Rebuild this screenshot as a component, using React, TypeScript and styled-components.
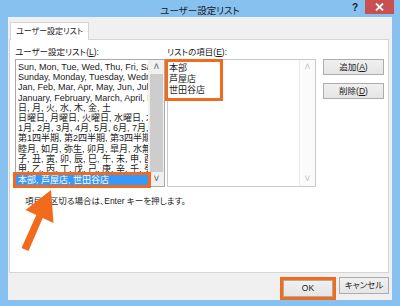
import styled, { createGlobalStyle } from 'styled-components';

const ORANGE = '#f26a1b';
const UI_FONT = `"Liberation Sans", "Noto Sans CJK JP", sans-serif`;

const LEFT_ITEMS = [
  'Sun, Mon, Tue, Wed, Thu, Fri, Sat',
  'Sunday, Monday, Tuesday, Wednesday, Thursday',
  'Jan, Feb, Mar, Apr, May, Jun, Jul, Aug, Sep',
  'January, February, March, April, May, June',
  '日, 月, 火, 水, 木, 金, 土',
  '日曜日, 月曜日, 火曜日, 水曜日, 木曜日',
  '1月, 2月, 3月, 4月, 5月, 6月, 7月, 8月',
  '第1四半期, 第2四半期, 第3四半期, 第4四半期',
  '睦月, 如月, 弥生, 卯月, 皐月, 水無月',
  '子, 丑, 寅, 卯, 辰, 巳, 午, 未, 申, 酉, 戌, 亥',
  '甲, 乙, 丙, 丁, 戊, 己, 庚, 辛, 壬, 癸',
];

const RIGHT_ITEMS = ['本部', '芦屋店', '世田谷店'];

const GlobalStyle = createGlobalStyle`
  html, body { margin: 0; padding: 0; background: #86c1ef; }
  body { font-family: ${UI_FONT}; }
`;

export default function App() {
  return (
    <>
      <GlobalStyle />
      <Frame>
        <TitleBar>
          <span />
          <Title>ユーザー設定リスト</Title>
          <Caption>
            <HelpMark>?</HelpMark>
            <CloseBox>
              <svg width="9" height="8" viewBox="0 0 9 8" aria-hidden="true">
                <path d="M1 0.5 L8 7.5 M8 0.5 L1 7.5" stroke="#fff" strokeWidth="1.8" />
              </svg>
            </CloseBox>
          </Caption>
        </TitleBar>

        <Client>
          <TabStrip>
            <Tab>ユーザー設定リスト</Tab>
          </TabStrip>
          <Panel>
            <Columns>
              <Column $width={150}>
                <FieldLabel>ユーザー設定リスト(<u>L</u>):</FieldLabel>
                <ListBox>
                  <Rows>
                    {LEFT_ITEMS.map(item => (
                      <Row key={item}>{item}</Row>
                    ))}
                    <Row $selected>本部, 芦屋店, 世田谷店</Row>
                  </Rows>
                  <ScrollBar>
                    <Arrow $disabled={false}>˄</Arrow>
                    <Thumb />
                    <Arrow $disabled={false}>˅</Arrow>
                  </ScrollBar>
                </ListBox>
              </Column>
              <Column $width={149}>
                <FieldLabel>リストの項目(<u>E</u>):</FieldLabel>
                <ListBox $light>
                  <Rows>
                    <EntryGroup>
                      {RIGHT_ITEMS.map(item => (
                        <Entry key={item}>{item}</Entry>
                      ))}
                    </EntryGroup>
                  </Rows>
                  <ScrollBar $disabled>
                    <Arrow $disabled>˄</Arrow>
                    <Spacer />
                    <Arrow $disabled>˅</Arrow>
                  </ScrollBar>
                </ListBox>
              </Column>
              <SideButtons>
                <PushButton $width={61}>追加(<u>A</u>)</PushButton>
                <PushButton $width={61}>削除(<u>D</u>)</PushButton>
              </SideButtons>
            </Columns>
            <Hint>項目を区切る場合は、Enter キーを押します。</Hint>
          </Panel>
          <Footer>
            <Highlight>
              <PushButton $width={50} $tall>OK</PushButton>
            </Highlight>
            <PushButton $width={50} $tall>キャンセル</PushButton>
          </Footer>
        </Client>

        <Pointer width="400" height="306" viewBox="0 0 400 306" aria-hidden="true">
          <polygon
            points="51,190 53.5,223 42.7,218 28.5,251 21.5,248 36.3,215 25.5,210"
            fill={ORANGE}
          />
        </Pointer>
      </Frame>
    </>
  );
}

// ─── Styles ──────────────────────────────────────────────────────────────

const Frame = styled.div`
  position: relative;
  width: 400px;
  height: 306px;
  background: #86c1ef;
  display: flex;
  flex-direction: column;
  overflow: hidden;
`;

const TitleBar = styled.div`
  height: 22px;
  display: grid;
  grid-template-columns: 1fr auto 1fr;
  align-items: start;
`;

const Title = styled.div`
  padding-top: 4px;
  font-size: 9.5px;
  line-height: 13px;
  color: #1a1a1a;
  font-feature-settings: "palt";
`;

const Caption = styled.div`
  display: flex;
  justify-content: flex-end;
  align-items: flex-start;
  padding-right: 6px;
`;

const HelpMark = styled.span`
  font-size: 10px;
  font-weight: bold;
  line-height: 14px;
  color: #222;
  margin-right: 7px;
  padding-top: 1px;
`;

const CloseBox = styled.div`
  width: 29px;
  height: 14px;
  background: #c75050;
  display: flex;
  align-items: center;
  justify-content: center;
`;

const Client = styled.div`
  flex: 1;
  margin: 0 8px 8px;
  background: #f0f0f0;
  display: flex;
  flex-direction: column;
  padding: 5px 3px 0 1px;
`;

const TabStrip = styled.div`
  display: flex;
  padding-left: 1px;
`;

const Tab = styled.div`
  height: 17px;
  padding: 0 5px;
  border: 1px solid #d4d4d4;
  border-bottom: none;
  background: #fff;
  font-size: 8px;
  line-height: 17px;
  white-space: nowrap;
  color: #1a1a1a;
  font-feature-settings: "palt";
  margin-bottom: -1px;
  position: relative;
  z-index: 1;
`;

const Panel = styled.div`
  height: 225px;
  border: 1px solid #d4d4d4;
  background: #fff;
  padding: 7px 0 0 5px;
  display: flex;
  flex-direction: column;
`;

const Columns = styled.div`
  display: flex;
  gap: 2px;
`;

const Column = styled.div<{ $width: number }>`
  width: ${p => p.$width}px;
  display: flex;
  flex-direction: column;
`;

const FieldLabel = styled.div`
  height: 12px;
  font-size: 8.5px;
  line-height: 11px;
  color: #1a1a1a;
  font-feature-settings: "palt";
  white-space: nowrap;

  & u { text-underline-offset: 1px; }
`;

const ListBox = styled.div<{ $light?: boolean }>`
  height: 126px;
  border: 1px solid ${p => (p.$light ? '#c9c9c9' : '#a9a9a9')};
  display: flex;
  background: #fff;
`;

const Rows = styled.div`
  flex: 1;
  min-width: 0;
  display: flex;
  flex-direction: column;
  padding-top: 2px;
`;

const Row = styled.div<{ $selected?: boolean }>`
  height: 10.2px;
  padding-left: 2px;
  font-size: 9px;
  line-height: 10.2px;
  white-space: nowrap;
  overflow: hidden;
  color: ${p => (p.$selected ? '#fff' : '#1a1a1a')};
  background: ${p => (p.$selected ? '#3399ff' : 'transparent')};
  position: relative;
  z-index: ${p => (p.$selected ? 2 : 0)};
  outline: ${p => (p.$selected ? `3px solid ${ORANGE}` : 'none')};
  margin-top: ${p => (p.$selected ? '1px' : '0')};
`;

const EntryGroup = styled.div`
  align-self: flex-start;
  width: 52px;
  height: 35px;
  margin: -3px 0 0 -3px;
  border: 3px solid ${ORANGE};
  padding-top: 1px;
`;

const Entry = styled.div`
  height: 11px;
  font-size: 9px;
  line-height: 11px;
  padding-left: 1px;
  color: #1a1a1a;
`;

const ScrollBar = styled.div<{ $disabled?: boolean }>`
  width: 15px;
  display: flex;
  flex-direction: column;
  background: ${p => (p.$disabled ? '#fbfbfb' : '#f0f0f0')};
  border-left: 1px solid ${p => (p.$disabled ? '#ececec' : '#f0f0f0')};
`;

const Arrow = styled.div<{ $disabled: boolean }>`
  height: 14px;
  font-size: 10px;
  line-height: 14px;
  text-align: center;
  color: ${p => (p.$disabled ? '#c4c4c4' : '#606060')};
`;

const Thumb = styled.div`
  flex: 1;
  margin: 0 1px;
  background: #cdcdcd;
`;

const Spacer = styled.div`
  flex: 1;
`;

const SideButtons = styled.div`
  margin-left: 5px;
  padding-top: 12px;
  display: flex;
  flex-direction: column;
  gap: 8px;
`;

const PushButton = styled.div<{ $width: number; $tall?: boolean }>`
  width: ${p => p.$width}px;
  height: ${p => (p.$tall ? 17 : 16)}px;
  box-sizing: border-box;
  border: 1px solid #acacac;
  background: linear-gradient(#f0f0f0, #e5e5e5);
  font-size: 8.5px;
  line-height: ${p => (p.$tall ? 15 : 14)}px;
  text-align: center;
  color: #1a1a1a;
  font-feature-settings: "palt";

  & u { text-underline-offset: 1px; }
`;

const Hint = styled.div`
  margin-top: 9px;
  padding-left: 10px;
  font-size: 8.5px;
  line-height: 10px;
  color: #1a1a1a;
  font-feature-settings: "palt";
`;

const Footer = styled.div`
  display: flex;
  justify-content: flex-end;
  align-items: flex-start;
  gap: 3px;
  padding-top: 4px;
`;

const Highlight = styled.div`
  border: 3px solid ${ORANGE};
`;

const Pointer = styled.svg`
  position: absolute;
  left: 0;
  top: 0;
  pointer-events: none;
`;
